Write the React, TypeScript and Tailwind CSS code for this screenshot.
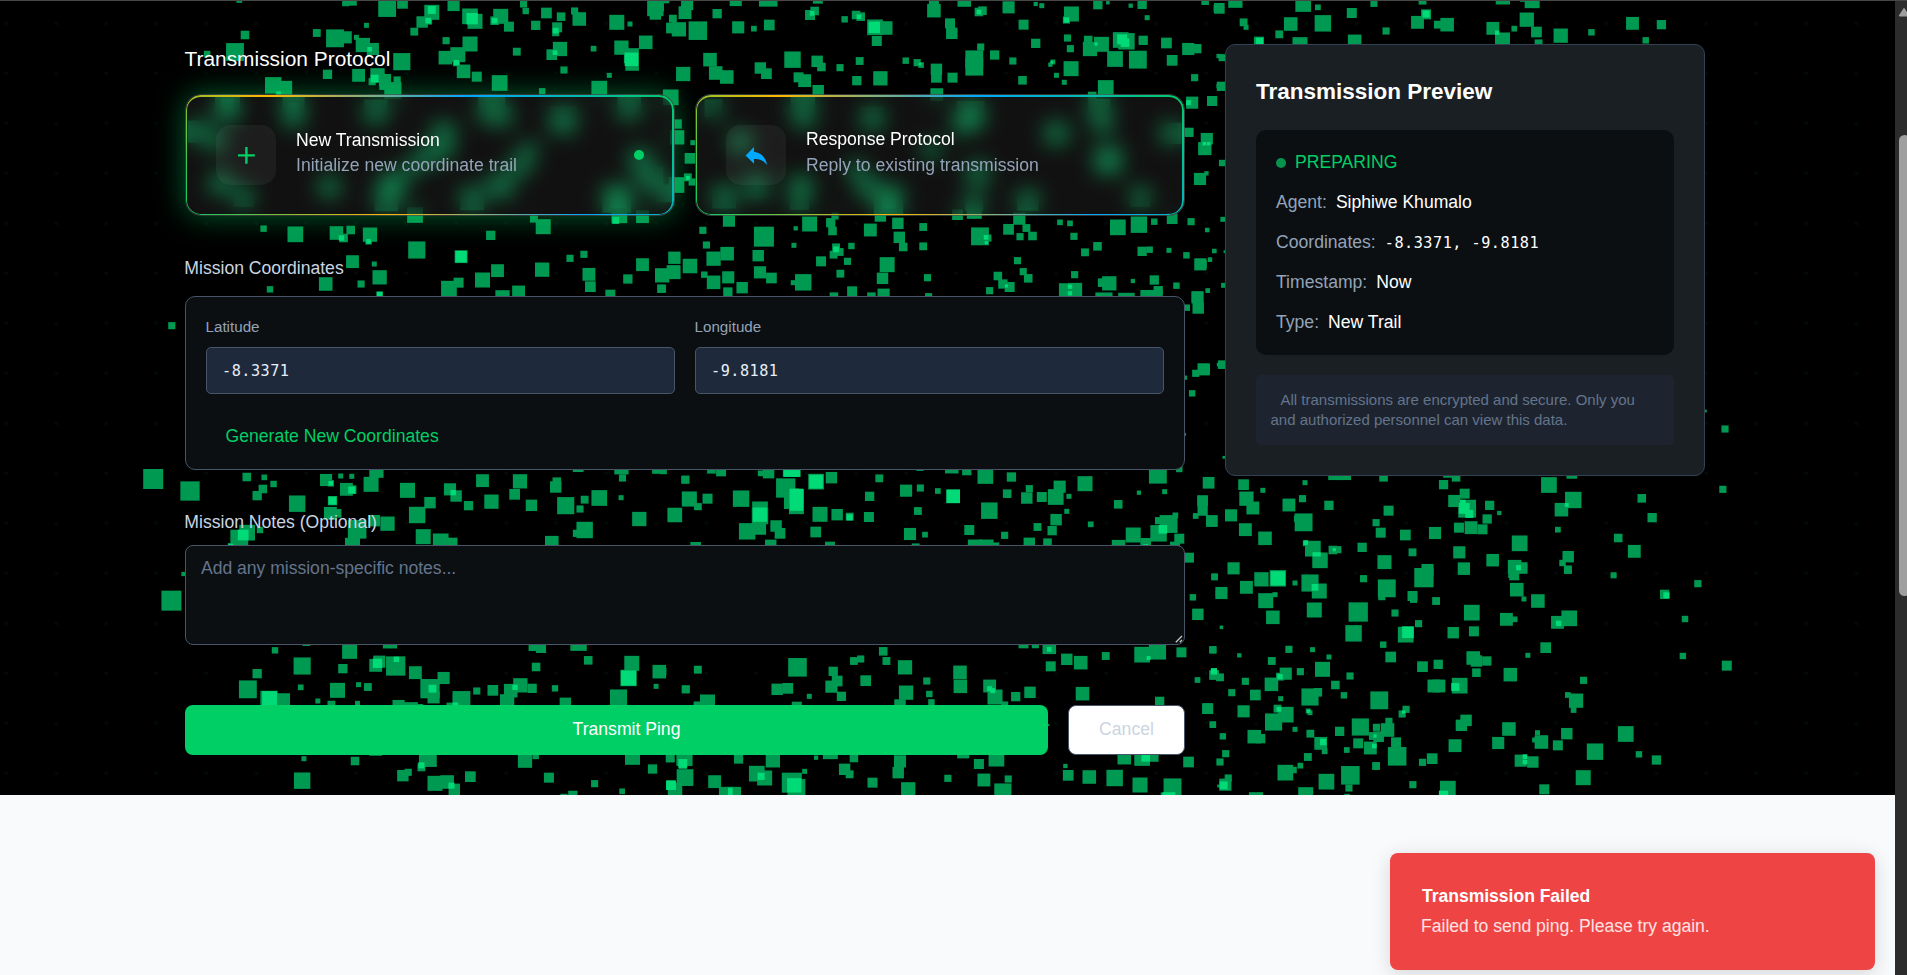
import React from "react";
import { MdAdd, MdReply } from "react-icons/md";

type Patch = { x: number; y: number; solid: string; bright: string };

// Particle field, stored per tile as "cx,cy,size" on a 2.8 x 3 sub-pixel grid.
const patches: Patch[] = [
  {
    x: 140,
    y: 0,
    solid:
      "278,0,16 576,8,20 594,3,26 692,24,50 735,10,30 817,37,42 790,66,32 807,62,22 878,15,34 924,49,44 938,64,42 1010,49,42 993,62,24 1033,80,28 1074,12,20 1080,33,18 1138,39,30 1179,50,24 1168,82,28 1164,98,20 1217,33,20 1230,57,38 1335,67,42 1372,72,14 1443,24,46 1443,42,32 634,76,14 768,95,22 1108,76,26 294,105,24 495,99,22 546,115,50 576,112,34 606,112,14 624,135,40 652,147,34 266,156,50 188,162,18 733,185,48 857,122,20 924,132,42 855,173,38 890,164,42 886,188,20 906,214,38 943,230,28 1007,249,44 1055,155,22 1176,147,40 1153,164,30 1270,146,16 1348,143,40 1376,167,42 1378,192,38 1416,127,38 1521,222,40 1187,210,20 1314,226,14 1286,266,44 1126,274,18 525,223,26 612,226,36 665,226,40 650,245,20 686,240,34 681,258,22 720,240,20 708,272,48 373,256,46 406,264,40 388,281,16 346,686,18 435,703,44 550,699,38 590,690,24 570,714,24 644,704,40 640,724,18 770,645,44 982,706,26 1103,656,22 1129,680,42 1342,646,44 1332,661,20 1407,650,36 775,750,48 899,770,36 595,785,36 656,792,14 671,832,40 520,852,38 619,852,20 364,868,18 671,884,18 865,866,44 892,848,28 959,840,42 1001,812,36 1126,809,40 1204,775,20 1243,763,20 1257,823,36 1261,860,30 1366,837,26 1407,794,36 1496,773,34 1462,826,40 1494,816,38 1540,798,40 1460,866,24 1015,892,40 1060,876,36 1317,884,28",
    bright:
      "817,30,22 807,62,16 930,56,32 993,62,16 1164,92,16 1376,178,38 1162,158,13 643,148,13 657,236,22 886,188,15 564,714,15 640,724,13 899,770,32 671,884,16 1332,661,18 388,281,13",
  },
  {
    x: 660,
    y: 0,
    solid:
      "70,38,36 76,12,34 36,56,22 160,41,26 32,84,30 53,88,40 106,92,52 212,0,34 303,-8,52 219,82,34 263,86,16 306,75,30 0,22,22 12,-5,28 420,45,28 433,33,24 442,-4,28 517,58,18 549,45,24 562,50,24 602,82,44 632,84,38 607,123,28 767,32,38 767,8,28 852,0,38 812,70,28 817,100,32 893,36,24 903,32,24 898,141,20 976,22,34 1018,74,28 1052,12,12 1069,17,14 1152,42,42 1138,60,20 1226,14,26 1254,8,10 1318,17,12 1350,13,26 1364,53,14 1527,4,20 1560,25,20 1052,130,26 1141,114,20 1149,146,20 1199,120,24 1204,147,40 1236,133,42 1290,120,44 1306,124,46 1353,121,26 1418,129,30 1274,177,44 1338,179,50 1434,181,30 1479,147,34 1503,146,26 1497,233,20 1564,168,12 1564,258,12 140,179,38 156,219,38 187,231,38 371,179,46 440,184,32 452,201,24 504,203,20 559,183,22 551,242,26 617,235,40 281,204,32 298,221,30 388,232,28 405,242,36 443,272,32 688,182,18 720,188,20 731,195,16 774,208,32 774,232,30 819,233,28 880,178,50 880,200,50 937,165,26 988,183,20 1100,186,14 1093,194,12 1110,226,14 1151,206,42 1132,247,14 1015,241,24 1248,264,44 1210,288,24 775,284,36 1490,308,34 1546,303,28 1481,397,26 1530,416,32 1525,446,36 1512,537,34 1530,520,12 48,372,26 48,412,40 92,428,14 84,475,30 78,532,22 90,546,20 46,555,44 30,292,44 193,662,34 120,691,20 130,735,20 291,710,56 380,685,12 419,672,42 478,668,26 483,693,24 490,648,20 375,736,14 493,742,22 503,756,22 486,764,22 536,738,18 589,690,36 617,648,32 666,670,32 670,712,32 681,741,24 737,681,22 737,739,22 525,784,20 451,784,28 275,767,32 188,761,38 150,776,40 41,774,32 84,798,40 10,826,30 38,817,38 7,866,20 124,824,18 150,847,38 191,832,34 230,863,32 190,876,26 280,817,34 312,834,30 401,847,46 373,848,14 505,821,22 538,874,28 487,890,24 592,890,24 626,884,34 623,835,32 636,794,42 749,833,20 752,890,20 833,644,30 880,634,42 896,709,50 918,714,20 976,688,30 1006,656,34 1026,684,22 1008,710,20 1043,708,24 1120,667,16 1148,670,16 1159,709,20 1190,757,22 1225,739,24 1282,682,44 1341,674,46 1384,665,18 1434,656,30 1487,665,20 1532,690,12 1350,754,26 1371,749,18 1425,751,14 1474,766,18 1513,793,34 1540,779,12 1552,753,12 1001,782,20 1161,824,20 946,828,24 960,852,26 979,861,28 923,872,20 1017,815,20 1031,835,24 1136,870,38 1162,870,40 1258,850,40 1238,848,24 1324,843,12 1384,840,26 1395,872,26 1446,857,18 1243,903,48 1306,903,46 1376,903,62 1505,892,34 1534,872,12",
    bright:
      "426,40,13 557,50,13 600,82,32 893,36,13 1138,60,15 1294,118,28 1302,128,24 1097,187,7 728,192,7 1480,308,14 78,534,11 493,748,16 913,712,13 914,728,9 1148,860,12 1148,880,12 970,858,9 1221,132,9",
  },
  {
    x: 140,
    y: 280,
    solid:
      "89,137,20 37,597,56 140,633,54 122,882,12 299,591,24 348,592,16 374,612,18 344,627,24 328,647,26 440,671,46 521,600,34 534,610,18 562,588,14 593,589,14 578,628,36 594,629,24 647,613,42 662,572,40 539,662,26 533,700,36 552,700,24 749,631,42 776,705,46 812,668,32 693,731,40 656,722,32 608,748,52 793,770,42 842,784,44 875,788,28 868,628,34 885,648,32 920,677,26 959,602,36 984,665,40 1064,604,40 1049,643,30 1096,676,32 1164,621,32 1167,605,24 1192,677,48 1227,560,30 1245,659,22 1232,687,20 1286,654,44 1347,653,14 1348,562,40 1351,594,20 1398,717,40 1454,560,40 1527,599,22 1538,657,40 1560,680,18 1498,705,40 1245,750,46 1222,760,20 1153,788,38 300,758,44 278,776,50 336,750,18 254,798,16 595,796,42",
    bright: "534,610,13 593,630,20 539,662,22 289,765,30 877,638,15 254,798,13",
  },
  {
    x: 660,
    y: 280,
    solid:
      "1475,83,18 1505,52,32 1507,84,32 1534,32,12 1522,268,34 1500,280,20 1470,293,12 1490,340,18 1469,463,8 1564,254,10 9,572,20 71,599,22 144,568,24 171,574,28 282,580,16 304,578,32 369,564,50 352,624,54 82,657,42 133,656,28 107,680,20 41,705,40 227,656,46 280,688,44 280,708,46 244,754,46 280,746,34 325,738,32 336,760,30 375,657,56 382,680,42 437,605,44 480,593,32 448,703,42 496,704,32 531,710,22 436,756,30 585,711,28 587,649,26 614,595,22 689,632,34 729,624,20 778,633,16 821,649,38 722,693,22 700,762,34 742,764,16 728,562,20 817,560,38 859,572,26 911,588,44 984,591,26 972,641,24 922,692,46 866,750,28 965,766,20 1034,626,20 1027,654,32 1069,651,28 1108,651,44 1119,620,34 1145,649,14 1139,694,14 1109,719,32 1098,752,26 1057,741,22 1034,790,32 1085,788,24 1190,611,42 1206,733,16 1283,673,24 1341,638,12 1413,635,14 1394,584,50 1454,567,18 1536,608,32 1519,662,30 1519,692,28 1500,708,16 1545,723,32 1424,732,50 1396,722,20 1396,760,46 1325,765,42 1360,790,30 1284,800,38 1454,776,28 1442,800,28 1443,706,16 1482,832,26 1553,890,18 100,802,30 310,796,32 476,800,28 716,802,22 882,800,40 914,800,40 940,798,20",
    bright:
      "369,566,46 376,640,26 388,640,26 382,672,38 382,650,38 280,704,40 437,605,38 531,712,17 821,649,38 1408,748,24 1360,800,14",
  },
  {
    x: 140,
    y: 560,
    solid:
      "88,122,56 122,42,10 378,271,18 466,246,22 587,274,42 700,244,40 454,318,48 568,326,26 660,316,36 670,305,34 716,318,54 771,338,36 850,354,34 812,386,54 822,412,34 328,341,26 302,388,50 361,418,48 402,419,36 450,382,16 553,391,42 498,423,14 536,434,22 612,374,14 638,381,22 609,430,14 724,438,34 756,450,44 776,450,34 900,420,50 885,414,18 875,446,34 943,393,20 988,391,30 1038,392,38 1065,376,40 1098,385,26 1028,424,40 1104,256,32 1123,264,28 1109,321,24 1162,385,18 1191,430,32 1228,248,46 1255,301,24 1377,310,42 1368,354,46 1340,414,48 1454,335,38 1445,379,14 1528,388,22 1560,330,18 1560,434,18 459,596,14 454,662,46 602,603,24 660,568,36 806,594,50 788,622,22 736,647,32 751,637,20 826,670,42 860,666,38 880,688,32 925,650,30 1078,602,40 1108,588,18 1145,653,28 1212,706,26 1187,712,20 1273,671,20 1350,694,16 1379,592,42 1435,627,26 1485,594,24 1525,594,44 1520,614,24 1526,653,46 1498,690,40 1486,676,26",
    bright:
      "665,310,26 718,298,15 819,386,22 363,416,42 1050,382,15 1368,354,42 883,436,16 788,616,17 872,677,17 1520,610,24 1487,676,26",
  },
  {
    x: 660,
    y: 560,
    solid:
      "106,329,22 72,388,22 8,335,20 385,322,52 328,388,32 358,385,30 418,409,14 133,426,42 103,436,18 383,440,28 485,334,26 496,363,30 480,380,34 508,409,26 543,303,22 562,297,20 576,362,30 625,274,24 634,303,22 686,322,40 689,398,40 672,435,32 747,363,20 754,402,18 760,427,18 840,337,38 841,379,38 923,378,36 938,411,42 965,435,20 996,410,26 1036,397,32 1018,250,28 1051,254,20 1090,262,38 1094,319,28 1139,298,32 1178,308,38 1183,401,38 1248,288,22 1350,284,44 1393,273,48 1460,277,28 1399,424,26 1482,-6,26 1553,51,18 1564,100,16 1492,112,18 1506,163,32 1548,270,20 1552,345,26 1564,354,8 1505,360,16 1533,446,30 1548,494,18 1087,495,6 28,594,24 68,594,44 70,653,46 42,690,40 30,676,26 153,665,36 185,702,40 207,702,40 220,597,26 271,641,44 293,654,42 316,601,40 369,668,56 382,684,50 405,634,14 437,593,12 477,575,42 517,628,32 531,643,22 543,594,24 595,668,28 672,604,34 667,638,32 695,688,40 806,655,20 849,577,34 893,612,28 942,596,44 907,660,36 975,657,20 960,696,48 1135,618,12 1143,646,30 1202,651,38 1273,654,46 1300,593,38 1344,675,42 1350,594,44 1376,584,40 1435,682,50 1480,606,30 1425,722,46 1564,606,10 1564,678,8",
    bright:
      "1090,268,13 923,386,14 932,392,14 64,610,24 31,676,26 283,649,20 376,676,40 197,690,13 197,702,13 1360,592,24 1425,716,36 1368,294,11 1551,334,17",
  },
  {
    x: 1200,
    y: 0,
    solid:
      "14,4,20 54,25,30 99,2,40 122,67,22 129,82,14 289,12,44 330,22,16 254,72,38 344,70,46 222,103,22 280,134,42 165,125,28 487,10,20 425,39,28 433,124,38 521,93,20 609,67,36 633,43,28 623,2,22 666,74,22 692,74,38 848,-8,40 930,2,42 903,-2,14 820,85,36 847,120,42 915,59,40 942,96,30 880,86,16 948,130,22 1010,107,40 1096,97,18 1211,70,36 1292,74,26 1248,121,18 62,173,20 60,259,26 34,303,28 20,416,32 14,446,36 62,489,18 64,658,14 20,690,12 40,753,12 28,779,12 8,793,22 70,755,8 66,856,14 22,872,12",
    bright: "633,42,20 167,124,20 832,98,12 24,431,10 12,431,10",
  },
  {
    x: 1200,
    y: 280,
    solid:
      "62,254,24 13,268,30 67,532,8 1415,393,8 24,608,32 122,614,30 176,631,14 294,608,14 376,582,34 406,582,34 287,656,20 130,656,40 148,684,36 249,675,36 361,676,26 514,592,24 528,692,28 8,662,28 8,692,26 33,723,32 87,706,34 127,749,36 182,775,38 290,727,50 272,716,18 493,728,20 506,758,28 575,765,30 658,759,34 682,614,26 697,576,32 717,592,24 741,641,28 712,663,34 748,686,50 811,676,26 838,699,12 804,717,26 725,743,28 759,743,36 791,748,28 726,817,34 739,866,34 595,817,22 454,802,26 517,847,38 316,806,44 296,790,16 336,840,42 372,810,24 386,809,20 819,841,34 895,790,44 881,860,38 880,886,28 901,864,32 977,615,44 1045,660,46 1012,689,38 1041,580,30 1002,749,16 1031,830,32 1015,849,18 1030,868,22 1171,774,24 1216,814,36 1237,655,24 1266,713,26 1464,628,20 1470,447,20 1158,886,16",
    bright: "740,685,30 754,702,22 736,668,16 321,823,12 332,823,12 376,809,9 1027,675,11 892,862,13 296,788,13",
  },
  {
    x: 1200,
    y: 560,
    solid:
      "94,25,34 41,51,18 60,99,34 130,82,36 172,58,40 218,55,46 266,69,14 308,69,48 334,93,42 336,2,42 184,122,42 210,104,14 204,172,38 320,150,42 60,202,10 458,56,20 516,6,38 523,85,50 509,110,20 627,53,54 637,30,34 595,108,28 598,118,20 661,123,22 546,159,20 612,191,20 443,156,54 430,220,46 576,224,44 582,217,34 739,26,34 820,0,34 878,38,30 901,24,30 887,89,38 907,117,14 946,123,38 1030,30,22 761,158,44 709,218,32 767,214,28 858,178,36 881,178,16 1001,187,36 1034,175,44 1158,46,16 1301,103,26 1394,71,20 1358,177,18 1352,288,18 1475,317,28 968,263,30 918,286,14 869,344,38 765,294,38 774,303,32 803,303,26 774,338,24 667,313,26 623,320,30 534,291,30 513,254,18 655,378,36 669,378,36 727,377,44 715,381,22 1074,361,20 249,268,20 315,269,14 361,291,14 36,269,20 110,286,12 201,303,22 240,341,34 281,335,20 343,328,42 224,350,22 200,373,38 127,364,20 420,348,20 379,375,24 403,406,18 155,405,30 89,398,20 226,416,14 308,411,48 330,397,24 39,345,26 56,352,22 502,421,50 577,448,20 566,462,20 122,454,34 217,446,22 240,464,44 206,486,48 22,446,30 36,494,18 303,453,14 308,458,14 266,508,14 309,521,22 391,514,26 449,501,48 494,502,20 529,484,20 525,510,38 500,530,30 484,528,22 443,550,28 477,564,36 549,547,28 552,589,52 338,550,36 349,574,16 302,591,22 281,617,16 411,570,16 152,530,38 170,536,26 64,529,18 72,581,20 56,606,20 239,638,44 262,630,18 354,665,44 421,646,52 417,684,20 493,618,22 596,674,20 650,596,30 623,607,20 714,557,36 745,481,32 732,496,32 865,507,38 835,549,34 945,518,14 956,546,38 937,540,14 1002,556,28 1027,521,32 1053,422,40 1030,405,16 1046,450,16 1106,575,46 1192,522,44 1073,653,42 1229,583,18 1278,600,26 898,602,34 932,606,32 964,688,28 694,686,44 682,706,26 296,704,42 157,718,40 412,710,16 71,674,34 79,654,20",
    bright:
      "218,55,40 322,82,19 582,217,32 892,24,13 1004,190,15 1306,106,17 715,381,22 224,350,15 39,334,17 221,448,13 345,546,18 488,558,13 490,528,9 66,676,22 910,590,13 910,606,13 682,706,26 570,456,9 304,454,9",
  },
];

// Larger squares that sit behind the frosted protocol cards.
const frosted: Patch[] = [
  {
    x: 140,
    y: 0,
    solid:
      "245,322,70 430,322,62 430,355,54 660,335,66 985,325,76 1015,350,54 1185,360,76 1370,318,66 165,395,62 215,425,50 850,400,66 845,445,62 800,470,60 225,550,62 290,590,56 530,560,60 705,555,72 690,598,66 755,510,46 930,595,66 1010,555,72 1065,495,60 1335,595,80 1400,480,64 1430,535,70 1470,580,50 1090,450,46",
    bright: "245,315,36 430,325,30 705,565,40 1340,600,46",
  },
  {
    x: 660,
    y: 0,
    solid:
      "400,318,68 405,355,56 595,355,64 870,345,78 845,375,54 1230,330,62 1240,370,56 1110,400,66 1255,480,80 225,425,60 270,560,66 180,590,66 395,560,66 390,600,54 640,600,82 580,560,60 890,520,64 880,605,50 1030,600,60 1345,590,56 1430,400,60 150,325,50 550,510,50 760,450,50",
    bright: "870,350,40 1255,485,30 640,604,40",
  },
];

const squares = (p: Patch, list: string, minY = -Infinity, maxY = Infinity) =>
  list.split(" ").map((entry, i) => {
    const [cx, cy, w] = entry.split(",").map(Number);
    const s = w / 2.8;
    const y = Math.min(Math.max(p.y - 1 + cy / 3 - s / 2, minY), maxY - s);
    return <rect key={i} x={p.x + cx / 2.8 - s / 2} y={y} width={s} height={s} />;
  });

function ParticleField() {
  return (
    <svg className="absolute inset-0 h-[794px] w-[1895px]" viewBox="0 0 1895 794" aria-hidden="true">
      <g fill="#009952">
        {patches.map((p, i) => (
          <g key={i}>{squares(p, p.solid)}</g>
        ))}
        {frosted.map((p, i) => (
          <g key={i}>{squares(p, p.solid, 95, 213)}</g>
        ))}
      </g>
      <g fill="#00db77">
        {patches.map((p, i) => (
          <g key={i}>{squares(p, p.bright)}</g>
        ))}
        {frosted.map((p, i) => (
          <g key={i}>{squares(p, p.bright, 95, 213)}</g>
        ))}
      </g>
    </svg>
  );
}

function ProtocolCard({
  icon,
  title,
  text,
  active,
}: {
  icon: React.ReactNode;
  title: string;
  text: string;
  active?: boolean;
}) {
  return (
    <div
      className={
        "relative flex h-[122px] items-center rounded-2xl border border-white/15 bg-[#2a2a2a]/40 px-[30px] backdrop-blur-[10px] " +
        (active ? "shadow-[0_0_30px_rgba(0,209,102,0.45)]" : "")
      }
    >
      <div className="pointer-events-none absolute inset-0 rounded-[15px] bg-[linear-gradient(45deg,#00cc66,#ffb800_33%,#00a8ff_66%,#00cc66)] pt-[2px] pr-[2px] pb-[1.4px] pl-px [mask:linear-gradient(#fff_0_0)_content-box_exclude,linear-gradient(#fff_0_0)]" />
      <div className="flex size-[60px] items-center justify-center rounded-[15px] bg-white/5 text-[28.8px]">{icon}</div>
      <div className="ml-[20px] flex flex-1 flex-col pb-[5px]">
        <h4 className={"text-[17.6px] leading-[25px] font-medium text-white " + (active ? "mt-px" : "")}>{title}</h4>
        <p className={"text-[17.6px] leading-[25px] text-[#94a3b8] " + (active ? "" : "mt-px")}>{text}</p>
      </div>
      {active && <span className="size-[10px] rounded-full bg-[#00cf66]" />}
    </div>
  );
}

function CoordinateField({ label, value }: { label: string; value: string }) {
  return (
    <label className="flex flex-col text-[15.2px] leading-[24px] text-[#94a3b8]">
      <span className="-ml-[0.5px]">{label}</span>
      <input
        readOnly
        value={value}
        className="mt-[8px] h-[47px] rounded-[5px] border border-[#475569] bg-[#1e293b] px-[15px] font-['DejaVu_Sans_Mono',monospace] text-[15.2px] tracking-[0.5px] text-[#e8eef6]"
      />
    </label>
  );
}

function PreviewRow({ label, children }: { label: string; children: React.ReactNode }) {
  return (
    <div className="flex h-[25px] items-center gap-[9px]">
      <span className="text-[#94a3b8]">{label}</span>
      {children}
    </div>
  );
}

export default function App() {
  return (
    <div className="flex h-[975px] w-[1907px] flex-col overflow-hidden bg-[#f9fafc] font-['Liberation_Sans',Arial,sans-serif] text-[17.6px] leading-[25px]">
      <div className="h-px shrink-0 bg-[#474747]" />
      <div className="flex min-h-0 flex-1">
        <main className="relative w-[1895px] shrink-0">
          <section className="relative flex h-[794px] gap-[40px] overflow-hidden bg-black bg-[radial-gradient(circle_at_center,#000c08_1px,transparent_2.5px)] bg-[size:50px_50px] bg-[position:-18.6px_-2.6px] pl-[185px]">
            <ParticleField />
            <form className="relative w-[1000px] pt-[39px]">
              <h3 className="-ml-[0.5px] h-[54px] text-[20.9px] leading-[37px] text-white">Transmission Protocol</h3>
              <div className="grid grid-cols-2 gap-[20px]">
                <ProtocolCard
                  active
                  icon={<MdAdd className="text-[#00cf66]" />}
                  title="New Transmission"
                  text="Initialize new coordinate trail"
                />
                <ProtocolCard
                  icon={<MdReply className="text-[#00a8ff]" />}
                  title="Response Protocol"
                  text="Reply to existing transmission"
                />
              </div>

              <h4 className="mt-[40px] -ml-[0.7px] text-[#cbd5e1]">Mission Coordinates</h4>
              <div className="mt-[15px] h-[174px] rounded-[10px] border border-[#475569] bg-[#0b0f12] px-[20px] pt-[18px]">
                <div className="grid grid-cols-2 gap-[20px]">
                  <CoordinateField label="Latitude" value="-8.3371" />
                  <CoordinateField label="Longitude" value="-9.8181" />
                </div>
                <button type="button" className="mt-[30px] ml-[19.5px] text-[#00cf66]">
                  Generate New Coordinates
                </button>
              </div>

              <h4 className="mt-[40px] -ml-[0.7px] text-[#cbd5e1]">Mission Notes (Optional)</h4>
              <div className="relative mt-[10px]">
                <textarea
                  placeholder="Add any mission-specific notes..."
                  className="block h-[100px] w-full resize-none rounded-[8px] border border-[#475569] bg-[#0b0f12] px-[15px] py-[10px] text-white outline-none placeholder:tracking-[-0.03px] placeholder:text-[#64748b]"
                />
                <svg className="absolute right-[1px] bottom-[1px] size-[9px]" viewBox="0 0 9 9" aria-hidden="true">
                  <path d="M0.8 7.2 L7 1 M4.8 7.2 L7 5" stroke="#c8c8c8" strokeWidth="1.3" />
                </svg>
              </div>

              <div className="mt-[60px] flex h-[50px] gap-[20px]">
                <button
                  type="button"
                  className="w-[863px] rounded-[8px] bg-[#00cf66] pb-px pl-[20px] font-medium text-white"
                >
                  Transmit Ping
                </button>
                <button
                  type="button"
                  className="flex-1 rounded-[8px] border border-[#475569] bg-white pb-px text-[#cbd5e1]"
                >
                  Cancel
                </button>
              </div>
            </form>

            <aside className="relative mt-[43px] h-[432px] w-[480px] rounded-[10px] border border-[#334155] bg-[#1a1f23] p-[30px]">
              <h3 className="mb-[20px] h-[35px] text-[22.5px] leading-[34px] font-bold text-white">
                Transmission Preview
              </h3>
              <div className="flex flex-col gap-[15px] rounded-[10px] bg-[#0b0f12] p-[20px] text-white">
                <div className="flex h-[25px] items-center gap-[9px] text-[#00cf66]">
                  <span className="size-[10px] rounded-full bg-[#07924d]" />
                  PREPARING
                </div>
                <PreviewRow label="Agent:">
                  <span>Siphiwe Khumalo</span>
                </PreviewRow>
                <PreviewRow label="Coordinates:">
                  <span className="pt-px font-['DejaVu_Sans_Mono',monospace] text-[15.2px] tracking-[0.5px]">
                    -8.3371, -9.8181
                  </span>
                </PreviewRow>
                <PreviewRow label="Timestamp:">
                  <span>Now</span>
                </PreviewRow>
                <PreviewRow label="Type:">
                  <span>New Trail</span>
                </PreviewRow>
              </div>
              <p className="mt-[20px] h-[70px] rounded-[5px] bg-[#1d2430] py-[15px] pl-[14.5px] indent-[10px] text-[15px] leading-[20px] text-[#64748b]">
                All transmissions are encrypted and secure. Only you
                <br />
                and authorized personnel can view this data.
              </p>
            </aside>
          </section>

          <div
            role="alert"
            className="absolute top-[852px] left-[1390px] flex h-[117px] w-[485px] flex-col gap-[5px] rounded-[8px] bg-[#ef4444] px-[31px] pt-[31px] text-white shadow-[0_4px_20px_rgba(0,0,0,0.15)]"
          >
            <strong className="ml-px font-bold tracking-[-0.05px]">Transmission Failed</strong>
            <span className="tracking-[-0.02px] text-white/85">Failed to send ping. Please try again.</span>
          </div>
        </main>

        <div className="flex w-[12px] shrink-0 flex-col items-start overflow-hidden bg-[#2c2c2c] pl-[3px]">
          <svg className="mt-[6px] h-[10px] w-[12px] shrink-0" viewBox="0 0 12 10" aria-hidden="true">
            <path d="M6 0.5 L11 8.2 Q11.4 9.6 10 9.6 H2 Q0.4 9.6 1 8.2 Z" fill="#9f9f9f" />
          </svg>
          <div className="mt-[118px] ml-px h-[461px] w-[11px] shrink-0 rounded-full bg-[#9f9f9f]" />
        </div>
      </div>
    </div>
  );
}
